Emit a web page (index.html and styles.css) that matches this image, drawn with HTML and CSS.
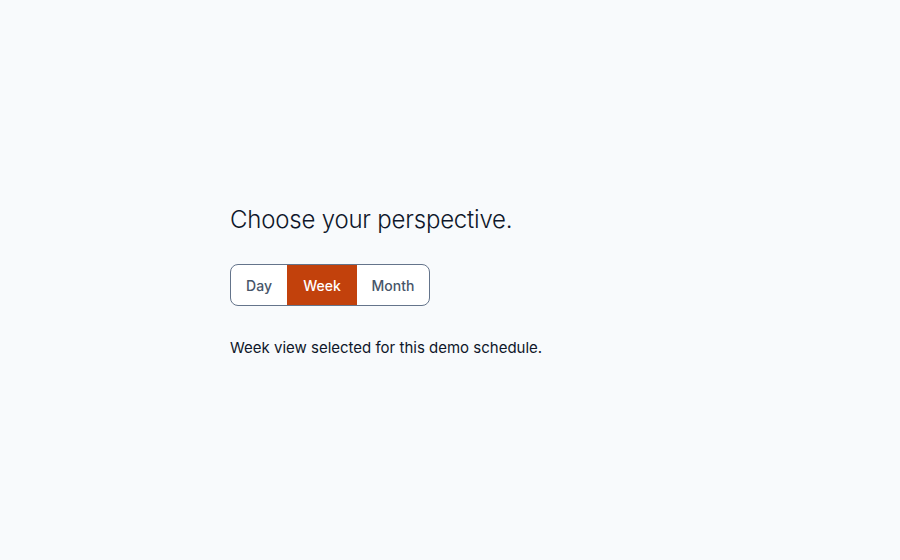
FILE: index.html
```html
<!DOCTYPE html>
<html lang="en">
<head>
<meta charset="utf-8">
<title>Choose your perspective</title>
<link rel="stylesheet" href="styles.css">
</head>
<body>
<main class="page">
  <section class="panel">
    <h1 class="title">Choose your perspective.</h1>
    <div class="segmented" role="tablist">
      <button class="seg seg-day">Day</button>
      <button class="seg seg-week active">Week</button>
      <button class="seg seg-month">Month</button>
    </div>
    <p class="status">Week view selected for this demo schedule.</p>
  </section>
</main>
</body>
</html>
```
FILE: styles.css
```css
* { box-sizing: border-box; }
html, body { margin: 0; padding: 0; }
body {
  background: #f8fafc;
  font-family: Inter, "Noto Sans", sans-serif;
  color: #0f172a;
}
.page {
  width: 900px;
  height: 560px;
  display: flex;
  align-items: center;
  justify-content: center;
}
.panel {
  width: 440px;
  display: flex;
  flex-direction: column;
  align-items: flex-start;
  padding-top: 3px;
}
.title {
  margin: 0;
  font-size: 24px;
  font-weight: 300;
  letter-spacing: -0.2px;
  line-height: 32px;
  color: #0f172a;
}
.segmented {
  margin-top: 28px;
  display: flex;
  height: 42px;
  border: 1px solid #64748b;
  border-radius: 8px;
  overflow: hidden;
  background: #ffffff;
}
.seg {
  border: 0;
  background: transparent;
  font-family: inherit;
  font-size: 14px;
  font-weight: 500;
  color: #475569;
  padding: 0;
  height: 100%;
}
.seg-day { width: 56px; }
.seg-week { width: 70px; }
.seg-month { width: 72px; }
.seg.active {
  background: #c2410c;
  color: #ffffff;
}
.status {
  margin: 31px 0 0;
  font-size: 15px;
  line-height: 22px;
  color: #0f172a;
}
```
